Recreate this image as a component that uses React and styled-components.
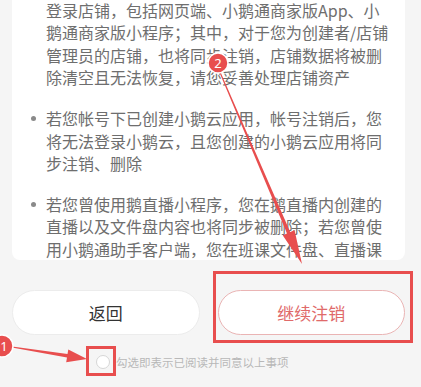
import React from "react";
import styled, { createGlobalStyle } from "styled-components";

const Global = createGlobalStyle`
  html, body { margin: 0; padding: 0; background: #f5f5f5; }
  body { width: 421px; height: 387px; overflow: hidden; font-family: "Noto Sans CJK SC", "Noto Sans", sans-serif; }
`;

const Page = styled.div`
  position: relative;
  width: 421px;
  height: 387px;
  overflow: hidden;
  background: #f5f5f5;
  display: flex;
  flex-direction: column;
`;

const Card = styled.div`
  margin: 0 16px 0 12px;
  height: 260px;
  background: #fff;
  border-radius: 0 0 8px 8px;
  overflow: hidden;
  padding: 0 15px 0 34px;
  box-sizing: border-box;
`;

const List = styled.ul`
  list-style: none;
  margin: -1px 0 0 0;
  padding: 0;
`;

const Item = styled.li`
  position: relative;
  font-size: 16px;
  line-height: 22.4px;
  color: #6e6e6e;
  margin-bottom: 18.5px;
  &::before {
    content: "";
    display: ${(p) => (p.$cont ? "none" : "block")};
    position: absolute;
    left: -15px;
    top: 8.7px;
    width: 5px;
    height: 5px;
    border-radius: 50%;
    background: #8a8a8a;
  }
`;

const Buttons = styled.div`
  display: flex;
  gap: 18px;
  margin: 30px 16px 0 12px;
`;

const Button = styled.button`
  flex: 1;
  height: 45px;
  border-radius: 23px;
  background: #fff;
  border: 1px solid ${(p) => (p.$danger ? "#eab4b4" : "#ececec")};
  color: ${(p) => (p.$danger ? "#e06a6a" : "#333")};
  font-family: "Noto Sans CJK SC", sans-serif;
  font-size: 17px;
  padding: 0;
`;

const AgreeRow = styled.div`
  display: flex;
  align-items: center;
  gap: 6px;
  margin: 19px 0 0 96px;
`;

const Radio = styled.span`
  width: 12px;
  height: 12px;
  border-radius: 50%;
  border: 1px solid #d6d6d6;
  background: #fff;
  flex: none;
`;

const AgreeText = styled.span`
  font-size: 11.5px;
  line-height: 16px;
  color: #b8b8b8;
`;

const Overlay = styled.svg`
  position: absolute;
  left: 0;
  top: 0;
  pointer-events: none;
`;

function arrowPoints(x1, y1, x2, y2, tail, shaft, headLen, headW) {
  const dx = x2 - x1, dy = y2 - y1;
  const len = Math.hypot(dx, dy);
  const ux = dx / len, uy = dy / len;
  const nx = -uy, ny = ux;
  const bx = x2 - ux * headLen, by = y2 - uy * headLen;
  const p = (x, y) => `${x.toFixed(1)},${y.toFixed(1)}`;
  return [
    p(x1 + nx * tail / 2, y1 + ny * tail / 2),
    p(bx + nx * shaft / 2, by + ny * shaft / 2),
    p(bx + nx * headW / 2, by + ny * headW / 2),
    p(x2, y2),
    p(bx - nx * headW / 2, by - ny * headW / 2),
    p(bx - nx * shaft / 2, by - ny * shaft / 2),
    p(x1 - nx * tail / 2, y1 - ny * tail / 2),
  ].join(" ");
}

const RED = "#e84e4e";

function Annotations() {
  return (
    <Overlay width="421" height="387" viewBox="0 0 421 387">
      <rect x="214.5" y="272.5" width="197" height="69" fill="none" stroke={RED} strokeWidth="3" />
      <rect x="87.5" y="347.5" width="27" height="27" fill="none" stroke={RED} strokeWidth="3" />
      <polygon points={arrowPoints(219, 70, 302, 264, 1, 3.5, 34, 13)} fill={RED} />
      <polygon points={arrowPoints(12, 347, 87, 359, 1.2, 3.5, 20, 13)} fill={RED} />
      <circle cx="218" cy="63" r="10" fill={RED} stroke="#fff" strokeWidth="1.5" />
      <text x="218" y="67.5" textAnchor="middle" fill="#fff" fontSize="13" fontFamily="Noto Sans, sans-serif">2</text>
      <circle cx="2" cy="346" r="11" fill={RED} stroke="#fff" strokeWidth="1.5" />
      <text x="4" y="350.5" textAnchor="middle" fill="#fff" fontSize="13" fontFamily="Noto Sans, sans-serif">1</text>
    </Overlay>
  );
}

export default function App() {
  return (
    <>
      <Global />
      <Page>
        <Card>
          <List>
            <Item $cont>
              登录店铺，包括网页端、小鹅通商家版App、小鹅通商家版小程序；其中，对于您为创建者/店铺管理员的店铺，也将同步注销，店铺数据将被删除清空且无法恢复，请您妥善处理店铺资产
            </Item>
            <Item>
              若您帐号下已创建小鹅云应用，帐号注销后，您将无法登录小鹅云，且您创建的小鹅云应用将同步注销、删除
            </Item>
            <Item>
              若您曾使用鹅直播小程序，您在鹅直播内创建的直播以及文件盘内容也将同步被删除；若您曾使用小鹅通助手客户端，您在班课文件盘、直播课内容也将同步被删除
            </Item>
          </List>
        </Card>
        <Buttons>
          <Button>返回</Button>
          <Button $danger>继续注销</Button>
        </Buttons>
        <AgreeRow>
          <Radio />
          <AgreeText>勾选即表示已阅读并同意以上事项</AgreeText>
        </AgreeRow>
        <Annotations />
      </Page>
    </>
  );
}
